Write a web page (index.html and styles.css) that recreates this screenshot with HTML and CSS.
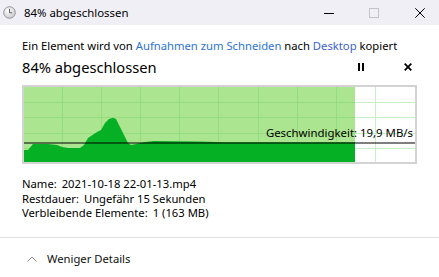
FILE: index.html
```html
<!DOCTYPE html>
<html lang="de">
<head>
<meta charset="utf-8">
<title>84% abgeschlossen</title>
<link rel="stylesheet" href="styles.css">
</head>
<body>
<div class="window">
  <header class="titlebar">
    <svg class="app-icon" width="13" height="13" viewBox="0 0 13 13" aria-hidden="true">
      <defs>
        <radialGradient id="cg" cx="0.4" cy="0.35" r="0.7">
          <stop offset="0" stop-color="#ffffff"/>
          <stop offset="1" stop-color="#c9c9cc"/>
        </radialGradient>
      </defs>
      <circle cx="6.5" cy="6.5" r="5.8" fill="url(#cg)" stroke="#8d8d92" stroke-width="0.9"/>
      <path d="M6.5 2.8 V6.8 H9.2" fill="none" stroke="#5b5b60" stroke-width="1"/>
    </svg>
    <span class="title">84% abgeschlossen</span>
    <div class="controls">
      <svg class="ctl ctl-min" width="10" height="10" viewBox="0 0 10 10"><path d="M0 5.5 H10" stroke="#000" stroke-width="1"/></svg>
      <svg class="ctl ctl-max" width="10" height="10" viewBox="0 0 10 10"><rect x="0.5" y="0.5" width="9" height="9" fill="none" stroke="#c4c4c8" stroke-width="1"/></svg>
      <svg class="ctl ctl-close" width="10" height="10" viewBox="0 0 10 10"><path d="M0.3 0.3 L9.7 9.7 M9.7 0.3 L0.3 9.7" stroke="#000" stroke-width="1"/></svg>
    </div>
  </header>

  <main class="content">
    <p class="route">Ein Element wird von <a class="link">Aufnahmen zum Schneiden</a> nach <a class="link link-dest">Desktop</a> kopiert</p>

    <div class="status-row">
      <h1 class="percent">84% abgeschlossen</h1>
      <div class="actions">
        <svg class="act act-pause" width="6" height="8" viewBox="0 0 6 8"><rect x="0" y="0" width="2" height="8" fill="#000"/><rect x="4" y="0" width="2" height="8" fill="#000"/></svg>
        <svg class="act act-cancel" width="8" height="8" viewBox="0 0 8 8"><path d="M0.7 0.7 L7.3 7.3 M7.3 0.7 L0.7 7.3" stroke="#000" stroke-width="1.8"/></svg>
      </div>
    </div>

    <div class="graph">
      <svg class="graph-svg" width="391" height="75" viewBox="0 0 391 75" aria-hidden="true">
        <rect x="0" y="0" width="391" height="75" fill="#ffffff"/>
        <rect x="0" y="0" width="331" height="75" fill="#abe590"/>
        <g stroke="#c8efc6" stroke-width="1">
          <path d="M351.5 0 V75"/>
          <path d="M331 15.5 H391 M331 30.5 H391 M331 46.5 H391 M331 61.5 H391"/>
        </g>
        <g stroke="#94dc7e" stroke-width="1">
          <path d="M38.5 0 V75 M77.5 0 V75 M116.5 0 V75 M155.5 0 V75 M194.5 0 V75 M234.5 0 V75 M273.5 0 V75 M312.5 0 V75"/>
          <path d="M0 15.5 H331 M0 30.5 H331 M0 46.5 H331 M0 61.5 H331"/>
        </g>
        <path fill="#06b025" d="M0 63 L4 63 L9 57 L24 57 L33 58 L38 60 L44 61 L56 61 L60 58 L64 51 L70 47 L73 45 L77 43 L81 36 L85 32 L89 30.7 L92 32 L96 40 L100 48 L104 56 L107 58 L112 57 L121 55 L130 54 L175 54.5 L200 55.3 L331 55.3 L331 75 L0 75 Z"/>
        <path d="M0 56 H391" stroke="#000" stroke-width="1.2"/>
      </svg>
      <span class="speed">Geschwindigkeit: 19,9 MB/s</span>
    </div>

    <div class="details">
      <p><span class="label">Name:</span> <span class="value">2021-10-18 22-01-13.mp4</span></p>
      <p><span class="label">Restdauer:</span> <span class="value">Ungefähr 15 Sekunden</span></p>
      <p><span class="label">Verbleibende Elemente:</span> <span class="value">1 (163 MB)</span></p>
    </div>
  </main>

  <footer class="more">
    <svg class="chevron" width="10" height="6" viewBox="0 0 10 6" aria-hidden="true"><path d="M0.5 5.5 L5 1 L9.5 5.5" fill="none" stroke="#8a8a8a" stroke-width="1"/></svg>
    <span class="more-text">Weniger Details</span>
  </footer>
</div>
</body>
</html>
```

FILE: styles.css
```css
* {
  box-sizing: border-box;
  margin: 0;
  padding: 0;
}

html, body {
  width: 439px;
  height: 277px;
  overflow: hidden;
  background: #ffffff;
}

body {
  font-family: "Noto Sans", "Open Sans", sans-serif;
  font-size: 11.25px;
  color: #000000;
}

.window {
  display: flex;
  flex-direction: column;
  height: 277px;
}

/* Title bar */
.titlebar {
  height: 25px;
  background: #f0eff6;
  display: flex;
  align-items: center;
}

.app-icon {
  margin-left: 3px;
  flex: none;
}

.title {
  margin-left: 8px;
  line-height: 16px;
  font-size: 11.4px;
}

.controls {
  margin-left: auto;
  margin-right: 14px;
  display: flex;
  align-items: center;
}

.ctl {
  display: block;
}

.ctl-max {
  margin-left: 35px;
}

.ctl-close {
  margin-left: 36px;
}

/* Content */
.content {
  padding: 0 22px;
}

.route {
  margin-top: 13px;
  line-height: 16px;
}

.link {
  color: #2e74cf;
  text-decoration: none;
}

.link-dest {
  color: #3b62d0;
}

.status-row {
  margin-top: 3px;
  display: flex;
  align-items: center;
  height: 20px;
}

.percent {
  font-size: 14.7px;
  font-weight: normal;
  line-height: 20px;
}

.actions {
  margin-left: auto;
  margin-right: 5px;
  display: flex;
  align-items: center;
  gap: 40px;
}

.act {
  display: block;
}

/* Graph */
.graph {
  position: relative;
  margin-top: 8px;
  width: 395px;
  height: 79px;
  border: 2px solid #d3d3d3;
}

.graph-svg {
  display: block;
}

.speed {
  position: absolute;
  top: 39px;
  right: 2px;
  line-height: 14px;
  font-size: 11.4px;
  white-space: nowrap;
}

/* Details */
.details {
  margin-top: 13px;
  line-height: 14.5px;
}

.label {
  margin-right: 2px;
}

/* Footer */
.more {
  margin-top: 16px;
  border-top: 1px solid #e2e2e2;
  padding: 13px 0 0 27px;
  display: flex;
  align-items: center;
  gap: 10px;
}

.chevron {
  display: block;
}

.more-text {
  line-height: 16px;
  color: #101010;
}
```
